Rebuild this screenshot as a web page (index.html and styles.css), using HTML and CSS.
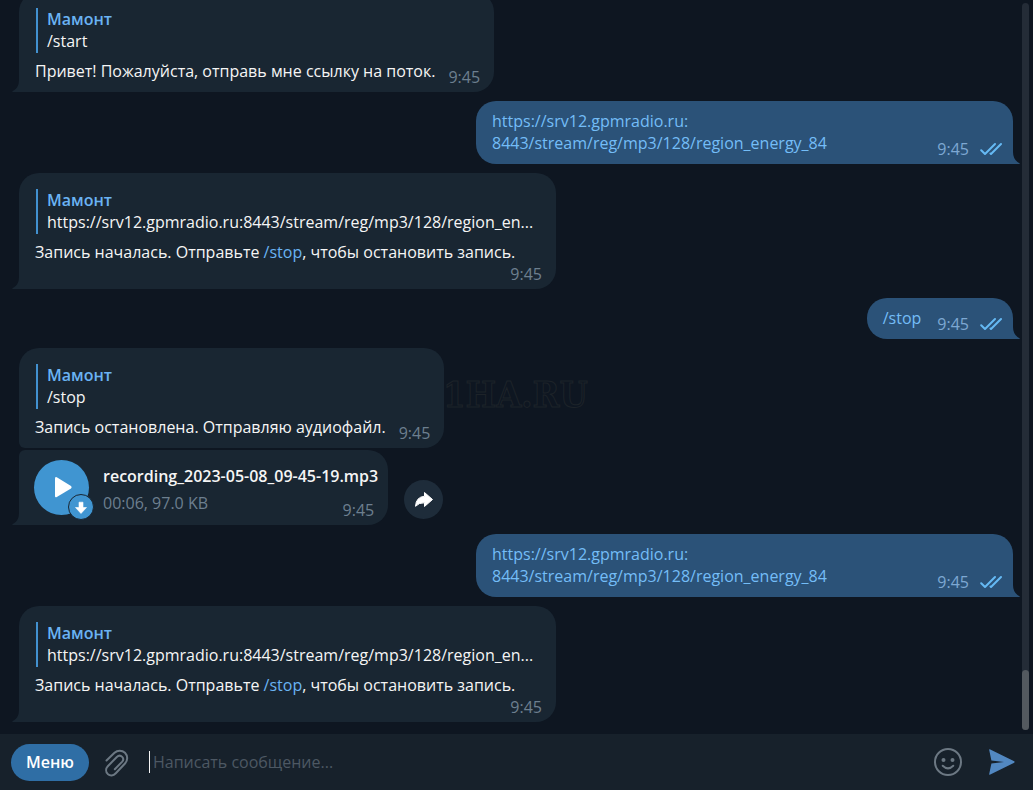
FILE: index.html
```html
<!DOCTYPE html>
<html lang="ru">
<head>
<meta charset="utf-8">
<meta name="viewport" content="width=device-width, initial-scale=1">
<title>Чат</title>
<link rel="stylesheet" href="styles.css">
</head>
<body>
<svg class="defs" aria-hidden="true">
  <symbol id="tail" viewBox="0 0 7 12"><path d="M7 0V12H0.3Q0 11.600 0.600 11.200Q7 8 7 0Z" fill="currentColor"/></symbol>
  <symbol id="checks" viewBox="0 0 22 14"><path d="M1.200 8.200L5 12L15 2M10.500 11.500L11 12L21 2" fill="none" stroke="currentColor" stroke-width="2" stroke-linecap="round" stroke-linejoin="round"/></symbol>
</svg>
<div class="app">
  <main class="chat">
    <div class="messages">
      <article class="bubble in">
        <blockquote class="quote"><b class="author">Мамонт</b><span class="quoted">/start</span></blockquote>
        <div class="row"><p class="text">Привет! Пожалуйста, отправь мне ссылку на поток.</p><time class="time">9:45</time></div>
        <svg class="tail"><use href="#tail"/></svg>
      </article>

      <article class="bubble out">
        <div class="row"><p class="text"><a href="#">https://srv12.gpmradio.ru:<wbr>8443/stream/reg/mp3/128/region_energy_84</a></p><time class="time">9:45</time><svg class="checks"><use href="#checks"/></svg></div>
        <svg class="tail"><use href="#tail"/></svg>
      </article>

      <article class="bubble in wide">
        <blockquote class="quote"><b class="author">Мамонт</b><span class="quoted">https://srv12.gpmradio.ru:8443/stream/reg/mp3/128/region_en...</span></blockquote>
        <div class="row stacked"><p class="text">Запись началась. Отправьте <a href="#">/stop</a>, чтобы остановить запись.</p><time class="time">9:45</time></div>
        <svg class="tail"><use href="#tail"/></svg>
      </article>

      <article class="bubble out">
        <div class="row"><p class="text"><a href="#">/stop</a></p><time class="time">9:45</time><svg class="checks"><use href="#checks"/></svg></div>
        <svg class="tail"><use href="#tail"/></svg>
      </article>

      <article class="bubble in grouped">
        <blockquote class="quote"><b class="author">Мамонт</b><span class="quoted">/stop</span></blockquote>
        <div class="row"><p class="text">Запись остановлена. Отправляю аудиофайл.</p><time class="time">9:45</time></div>
      </article>

      <div class="with-action">
        <article class="bubble in audio">
          <button class="play" type="button" aria-label="Воспроизвести">
            <svg class="play-icon" viewBox="0 0 55 55"><path d="M21 18.500V36Q21 38 22.800 37L37 28.500Q38.400 27.300 37 26L22.800 17.300Q21 16.300 21 18.500Z" fill="#fff"/></svg>
            <svg class="download" viewBox="0 0 26 26"><circle cx="13" cy="13" r="12.500" fill="#4095d1" stroke="#192632"/><path d="M11 8.200H15V13.500H18.500L13 19.500L7.500 13.500H11Z" fill="#fff" stroke="#fff" stroke-width=".6" stroke-linejoin="round"/></svg>
          </button>
          <div class="file">
            <strong class="file-name">recording_2023-05-08_09-45-19.mp3</strong>
            <div class="file-row"><span class="file-meta">00:06, 97.0 KB</span><time class="time">9:45</time></div>
          </div>
          <svg class="tail"><use href="#tail"/></svg>
        </article>
        <button class="forward" type="button" aria-label="Переслать">
          <svg viewBox="0 0 20 18"><path d="M10.500 1.500L18.500 8.500L10.500 15.500V11.800Q5 11.500 1.500 15.300Q2 6 10.500 5.200Z" fill="#fff" stroke="#fff" stroke-linejoin="round"/></svg>
        </button>
      </div>

      <article class="bubble out">
        <div class="row"><p class="text"><a href="#">https://srv12.gpmradio.ru:<wbr>8443/stream/reg/mp3/128/region_energy_84</a></p><time class="time">9:45</time><svg class="checks"><use href="#checks"/></svg></div>
        <svg class="tail"><use href="#tail"/></svg>
      </article>

      <article class="bubble in wide">
        <blockquote class="quote"><b class="author">Мамонт</b><span class="quoted">https://srv12.gpmradio.ru:8443/stream/reg/mp3/128/region_en...</span></blockquote>
        <div class="row stacked"><p class="text">Запись началась. Отправьте <a href="#">/stop</a>, чтобы остановить запись.</p><time class="time">9:45</time></div>
        <svg class="tail"><use href="#tail"/></svg>
      </article>
    </div>
    <div class="scrollbar"><div class="thumb"></div></div>
  </main>

  <form class="composer">
    <button class="menu" type="button">Меню</button>
    <button class="icon attach" type="button" aria-label="Прикрепить файл">
      <svg viewBox="0 0 26 30" width="26" height="30"><path d="M2.500 12.500L10.500 4.800C13.500 2 18 2 21 4.800C24 8 23.800 12.500 21 15.500L11.800 25.300C9.300 28 6 28 3.700 25.900C1.600 23.700 1.600 20.500 3.800 18.200L12.800 9C14.500 7.400 16.700 7.400 18.200 8.900C19.600 10.400 19.500 12.300 18 13.900L10.800 21.200" fill="none" stroke="#6c7883" stroke-width="2" stroke-linecap="round"/></svg>
    </button>
    <span class="caret"></span>
    <input class="field" type="text" placeholder="Написать сообщение..." aria-label="Сообщение">
    <button class="icon" type="button" aria-label="Эмодзи">
      <svg viewBox="0 0 28 28" width="28" height="28"><circle cx="14" cy="14" r="13" fill="none" stroke="#6c7883" stroke-width="2"/><circle cx="9.500" cy="12" r="2" fill="#6c7883"/><circle cx="18.500" cy="12" r="2" fill="#6c7883"/><path d="M8.700 17.800Q14 23 19.300 17.800" fill="none" stroke="#6c7883" stroke-width="2" stroke-linecap="round"/></svg>
    </button>
    <button class="icon" type="submit" aria-label="Отправить">
      <svg viewBox="0 0 26 26" width="26" height="26"><path d="M.8 .3L25.200 12.300Q26 13 25.200 13.700L.8 25.700Q0 26 .2 25L2.400 14.500L15 13L2.400 11.500L.2 1Q0 0 .8 .3Z" fill="#5288c1"/></svg>
    </button>
  </form>
</div>
<div class="watermark" aria-hidden="true">1HA.RU</div>
</body>
</html>
```
FILE: styles.css
```css
* { box-sizing: border-box; }

body {
  margin: 0;
  background: #0e1621;
  color: #f5f5f5;
  font: 16px/22px "Open Sans", "Noto Sans", sans-serif;
}

a { color: #6ab3f3; text-decoration: none; }
p, blockquote { margin: 0; }
button { padding: 0; border: 0; font: inherit; cursor: pointer; }
svg { display: block; }

.defs { position: absolute; width: 0; height: 0; }

.app { display: flex; flex-direction: column; height: 100vh; }

.chat {
  flex: 1;
  min-height: 0;
  display: flex;
  overflow: hidden;
}

.messages {
  flex: 1;
  min-width: 0;
  display: flex;
  flex-direction: column;
  justify-content: flex-end;
  align-items: flex-start;
  gap: 9px;
  padding: 0 9px 12px 19px;
}

.bubble {
  position: relative;
  flex: none;
  max-width: 537px;
  padding: 16px 14px 10px 16px;
  border-radius: 20px 20px 20px 0;
}

.in { background: #192632; color: #192632; }
.wide { width: 537px; }
.out {
  align-self: flex-end;
  padding: 9px 11px 10px 16px;
  border-radius: 20px 20px 0 20px;
  background: #2b5278;
  color: #2b5278;
}
.out a { color: #74bdf7; }
.grouped { margin-bottom: -7px; border-radius: 20px 20px 20px 6px; }

.tail {
  position: absolute;
  bottom: 0;
  left: -7px;
  width: 7px;
  height: 12px;
}
.out .tail { left: auto; right: -7px; transform: scaleX(-1); }

.quote {
  display: flex;
  flex-direction: column;
  height: 45px;
  margin: 0 2px 7px 1px;
  padding-left: 9px;
  border-left: 2px solid #4291d0;
}
.author { color: #6ab3f3; font-weight: 600; }
.quoted { color: #f5f5f5; white-space: nowrap; }

.row { display: flex; align-items: flex-end; }
.text { flex: 1; color: #f5f5f5; }
.time { flex: none; margin: 0 0 -6px 13px; color: #6d7f8f; }
.out .time { margin-left: 16px; color: #7da8d3; }
.stacked { flex-direction: column; }
.stacked .text { flex: none; align-self: stretch; }
.checks { flex: none; width: 22px; height: 14px; margin: 0 0 -2px 11px; color: #65b9f4; }

.with-action { display: flex; align-items: flex-end; gap: 16px; }
.audio {
  display: flex;
  gap: 14px;
  padding: 10px 10px 10px 15px;
  border-top-left-radius: 6px;
}
.play {
  position: relative;
  width: 55px;
  height: 55px;
  border-radius: 50%;
  background: #4095d1;
}
.download { position: absolute; right: -5px; bottom: -5px; width: 26px; height: 26px; }
.file { display: flex; flex-direction: column; gap: 5px; padding-top: 5px; }
.file-name { color: #f5f5f5; font-weight: 600; }
.file-row { display: flex; justify-content: space-between; align-items: flex-end; height: 23px; padding-right: 4px; }
.file-meta { align-self: flex-start; color: #6d7f8f; }

.forward {
  display: grid;
  place-items: center;
  width: 39px;
  height: 39px;
  margin-bottom: 6px;
  border-radius: 50%;
  background: #1e2c3a;
}
.forward svg { width: 20px; height: 18px; }

.scrollbar {
  display: flex;
  align-items: flex-end;
  width: 7px;
  margin: 3px 4px 4px 0;
  border-radius: 4px;
  background: #242c37;
}
.thumb { width: 7px; height: 60px; border-radius: 4px; background: #53595f; }

.composer {
  display: flex;
  align-items: center;
  height: 56px;
  padding: 0 18px 0 11px;
  background: #17212b;
}
.menu {
  padding: 7px 15px 8px;
  border-radius: 19px;
  background: #2f6ea5;
  color: #fff;
  font-weight: 600;
}
.icon { flex: none; background: none; }
.attach { margin: 2px 19px 0 15px; }
.caret { width: 1px; height: 22px; background: #f5f5f5; }
.field {
  flex: 1;
  min-width: 0;
  padding: 0 3px;
  border: 0;
  outline: 0;
  background: none;
  color: #f5f5f5;
  font: inherit;
}
.field::placeholder { color: #4d5863; opacity: 1; }
.icon + .icon { margin-left: 27px; }

.watermark {
  position: absolute;
  top: 373px;
  left: 443px;
  color: transparent;
  font: bold 36px/42px "DejaVu Serif Condensed", "DejaVu Serif", serif;
  -webkit-text-stroke: 1px #1d2329;
  pointer-events: none;
}
```
